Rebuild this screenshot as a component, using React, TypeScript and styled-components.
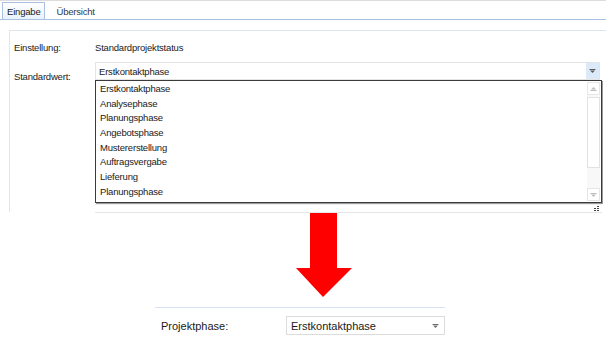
import React from "react";
import styled, { createGlobalStyle } from "styled-components";

const Global = createGlobalStyle`
  html, body { margin: 0; padding: 0; background: #fff; }
  body { font-family: "Liberation Sans", Arial, sans-serif; color: #1a1a1a; }
`;

const Page = styled.div`
  width: 606px;
  height: 339px;
  overflow: hidden;
  display: flex;
  flex-direction: column;
  border-top: 1px solid #dcdcdc;
  box-sizing: border-box;
`;

const TabBar = styled.div`
  height: 18px;
  display: flex;
  align-items: flex-end;
  border-bottom: 1px solid #a9c1e0;
  padding-left: 2px;
  font-size: 9.5px;
  letter-spacing: -0.2px;
`;

const Tab = styled.div<{ $active?: boolean }>`
  height: 17px;
  box-sizing: border-box;
  display: flex;
  align-items: center;
  padding: 1px 4px 0 4px;
  margin-right: 6px;
  color: ${(p) => (p.$active ? "#1a1a1a" : "#2a3a55")};
  border: 1px solid ${(p) => (p.$active ? "#a9c1e0" : "transparent")};
  border-bottom: none;
  background: ${(p) => (p.$active ? "linear-gradient(#ffffff, #e9f1fb)" : "transparent")};
`;

const Panel = styled.div`
  margin: 10px 0 0 9px;
  height: 182px;
  border-top: 1px solid #dde5ee;
  border-left: 1px solid #dde5ee;
  padding: 10px 0 0 4px;
  box-sizing: border-box;
  font-size: 9.5px;
  letter-spacing: -0.2px;
`;

const FieldRow = styled.div<{ $h: number }>`
  display: grid;
  grid-template-columns: 81px 1fr;
  height: ${(p) => p.$h}px;
  align-items: start;
`;

const Label = styled.div<{ $top?: number }>`
  padding-top: ${(p) => p.$top ?? 0}px;
`;

const Value = styled.div`
  padding-top: 1px;
`;

const ComboWrap = styled.div`
  width: 507px;
`;

const Combo = styled.div`
  width: 505px;
  height: 18px;
  box-sizing: border-box;
  border: 1px solid #e4e4e4;
  display: flex;
  align-items: center;
  padding-left: 3px;
`;

const ComboText = styled.span`
  flex: 1;
`;

const ComboButton = styled.div`
  width: 13px;
  height: 16px;
  background: #dce9f8;
  display: flex;
  align-items: center;
  justify-content: center;
`;

const CaretSvg = styled.svg`
  display: block;
`;

function Caret({ up, color }: { up?: boolean; color: string }) {
  return (
    <CaretSvg width="7" height="4" viewBox="0 0 7 4">
      {up ? (
        <>
          <polygon points="3.5,0 6,2.5 1,2.5" fill={color} />
          <rect x="0.5" y="3" width="6" height="1" fill={color} />
        </>
      ) : (
        <>
          <rect x="0.5" y="0" width="6" height="1" fill={color} />
          <polygon points="1,1.5 6,1.5 3.5,4" fill={color} />
        </>
      )}
    </CaretSvg>
  );
}

const List = styled.div`
  width: 507px;
  height: 123px;
  box-sizing: border-box;
  border: 1px solid #3a3a3a;
  box-shadow: 1px 1px 0 #9a9a9a;
  display: flex;
  background: #fff;
`;

const Items = styled.div`
  flex: 1;
  padding: 1px 0 0 4px;
`;

const Item = styled.div`
  height: 14.7px;
  line-height: 14.7px;
`;

const ScrollBar = styled.div`
  width: 13px;
  margin: 1px 1px 1px 0;
  display: flex;
  flex-direction: column;
  background: #f8f8f8;
`;

const ScrollBtn = styled.div`
  height: 13px;
  box-sizing: border-box;
  border: 1px solid #e6e6e6;
  background: #fff;
  display: flex;
  align-items: center;
  justify-content: center;
`;

const Thumb = styled.div`
  height: 71px;
  margin-top: 2px;
  box-sizing: border-box;
  border: 1px solid #e2e2e2;
  background: #fff;
`;

const Spacer = styled.div`
  flex: 1;
`;

const TextBox = styled.div`
  width: 507px;
  height: 9px;
  margin-top: 1px;
  box-sizing: border-box;
  border-top: 1px solid #f0f0f0;
  border-bottom: 1px solid #e6e6e6;
  display: flex;
  justify-content: flex-end;
  align-items: center;
  padding-right: 3px;
`;

const Grip = styled.svg`
  display: block;
`;

const ArrowArea = styled.div`
  height: 86px;
  padding-left: 295px;
`;

const Bottom = styled.div`
  margin-left: 155px;
  width: 290px;
  border-top: 1px solid #d6e5f5;
  margin-top: 9px;
  padding-top: 8px;
  display: flex;
  align-items: center;
  font-size: 11px;
`;

const BottomLabel = styled.div`
  width: 131px;
  padding-left: 6px;
  box-sizing: border-box;
`;

const BottomCombo = styled.div`
  width: 159px;
  height: 19px;
  box-sizing: border-box;
  border: 1px solid #dcdcdc;
  display: flex;
  align-items: center;
  padding: 0 5px 0 4px;
  justify-content: space-between;
`;

const items = [
  "Erstkontaktphase",
  "Analysephase",
  "Planungsphase",
  "Angebotsphase",
  "Mustererstellung",
  "Auftragsvergabe",
  "Lieferung",
  "Planungsphase",
];

export default function App() {
  return (
    <>
      <Global />
      <Page>
        <TabBar>
          <Tab $active>Eingabe</Tab>
          <Tab>Übersicht</Tab>
        </TabBar>
        <Panel>
          <FieldRow $h={21}>
            <Label $top={1}>Einstellung:</Label>
            <Value>Standardprojektstatus</Value>
          </FieldRow>
          <FieldRow $h={150}>
            <Label $top={9}>Standardwert:</Label>
            <ComboWrap>
              <Combo>
                <ComboText>Erstkontaktphase</ComboText>
                <ComboButton>
                  <Caret color="#5a5a5a" />
                </ComboButton>
              </Combo>
              <List>
                <Items>
                  {items.map((t, i) => (
                    <Item key={i}>{t}</Item>
                  ))}
                </Items>
                <ScrollBar>
                  <ScrollBtn>
                    <Caret up color="#bcbcbc" />
                  </ScrollBtn>
                  <Thumb />
                  <Spacer />
                  <ScrollBtn>
                    <Caret color="#bcbcbc" />
                  </ScrollBtn>
                </ScrollBar>
              </List>
              <TextBox>
                <Grip width="5" height="5" viewBox="0 0 5 5">
                  <rect x="3" y="0" width="2" height="1" fill="#444" />
                  <rect x="0" y="2" width="2" height="1" fill="#444" />
                  <rect x="3" y="2" width="2" height="1" fill="#444" />
                  <rect x="3" y="4" width="2" height="1" fill="#444" />
                  <rect x="0" y="4" width="2" height="1" fill="#444" />
                </Grip>
              </TextBox>
            </ComboWrap>
          </FieldRow>
        </Panel>
        <ArrowArea>
          <svg width="58" height="86" viewBox="0 0 58 86">
            <polygon
              points="15,1 42,1 42,56 57,56 28,85 1,56 15,56"
              fill="#ff0000"
            />
          </svg>
        </ArrowArea>
        <Bottom>
          <BottomLabel>Projektphase:</BottomLabel>
          <BottomCombo>
            <span>Erstkontaktphase</span>
            <Caret color="#707070" />
          </BottomCombo>
        </Bottom>
      </Page>
    </>
  );
}
